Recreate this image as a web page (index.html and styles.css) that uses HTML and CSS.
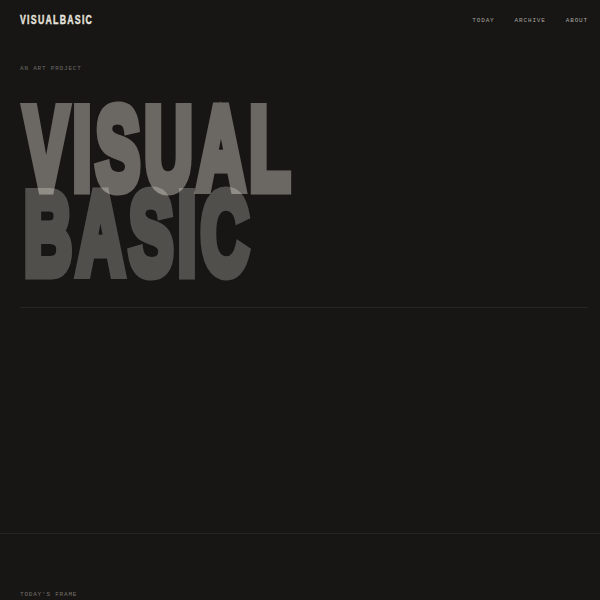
FILE: index.html
```html
<!DOCTYPE html>
<html lang="en">

<head>
  <meta charset="UTF-8">
  <meta name="viewport" content="width=device-width, initial-scale=1.0">
  <title>VisualBasic</title>
  <link rel="stylesheet" href="styles.css">
</head>

<body>
  <header class="site-header">
    <div class="logo">VISUALBASIC</div>
    <nav class="nav">
      <a href="#">TODAY</a>
      <a href="#">ARCHIVE</a>
      <a href="#">ABOUT</a>
    </nav>
  </header>

  <section class="hero">
    <p class="eyebrow">AN ART PROJECT</p>
    <h1 class="title">
      <span class="line line-top">VISUAL</span>
      <span class="line line-bottom">BASIC</span>
    </h1>
  </section>

  <!-- frame area -->
  <section class="frame"></section>

  <section class="today">
    <p class="label">TODAY'S FRAME</p>
  </section>
</body>

</html>
```

FILE: styles.css
```css
body {
  margin: 0;
  padding: 0;
  background-color: #171614;
  color: #a3a19c;
  font-family: "Liberation Sans", Arial, sans-serif;
  overflow: hidden;
}

.site-header {
  display: flex;
  justify-content: space-between;
  align-items: center;
  height: 40px;
  padding: 0 12px 0 20px;
}

.logo {
  font-weight: bold;
  font-size: 12.5px;
  letter-spacing: 1.8px;
  color: #e6e3de;
  -webkit-text-stroke: 0.4px #e6e3de;
  transform: scaleX(0.7);
  transform-origin: left center;
}

.nav {
  display: flex;
  gap: 20px;
}

.nav a {
  font-family: "Liberation Mono", monospace;
  font-size: 6px;
  letter-spacing: 0.85px;
  color: #a6a49f;
  text-decoration: none;
}

.hero {
  padding: 0 12px 0 20px;
}

.eyebrow {
  margin: 24px 0 0;
  font-family: "Liberation Mono", monospace;
  font-size: 6px;
  letter-spacing: 0.8px;
  color: #6b6a66;
  line-height: 10px;
}

.title {
  margin: 0;
  padding: 32px 0 31px;
  border-bottom: 1px solid #272624;
  font-weight: bold;
  font-size: 117px;
  line-height: 85px;
}

/* heavy condensed look: squeeze a bold face and fatten it with a stroke */
.line {
  display: block;
  width: max-content;
  margin-left: 4px;
  color: #fffaf0;
  -webkit-text-stroke: 11px #fffaf0;
  stroke-linejoin: round;
  letter-spacing: 8px;
  transform: scaleX(0.567);
  transform-origin: left center;
}

.line-top {
  opacity: 0.36;
}

.line-bottom {
  opacity: 0.25;
}

.frame {
  height: 225px;
  border-bottom: 1px solid #262523;
}

.today {
  padding: 0 20px;
}

.label {
  margin: 57px 0 0;
  font-family: "Liberation Mono", monospace;
  font-size: 6px;
  letter-spacing: 0.8px;
  color: #76706a;
}
```
